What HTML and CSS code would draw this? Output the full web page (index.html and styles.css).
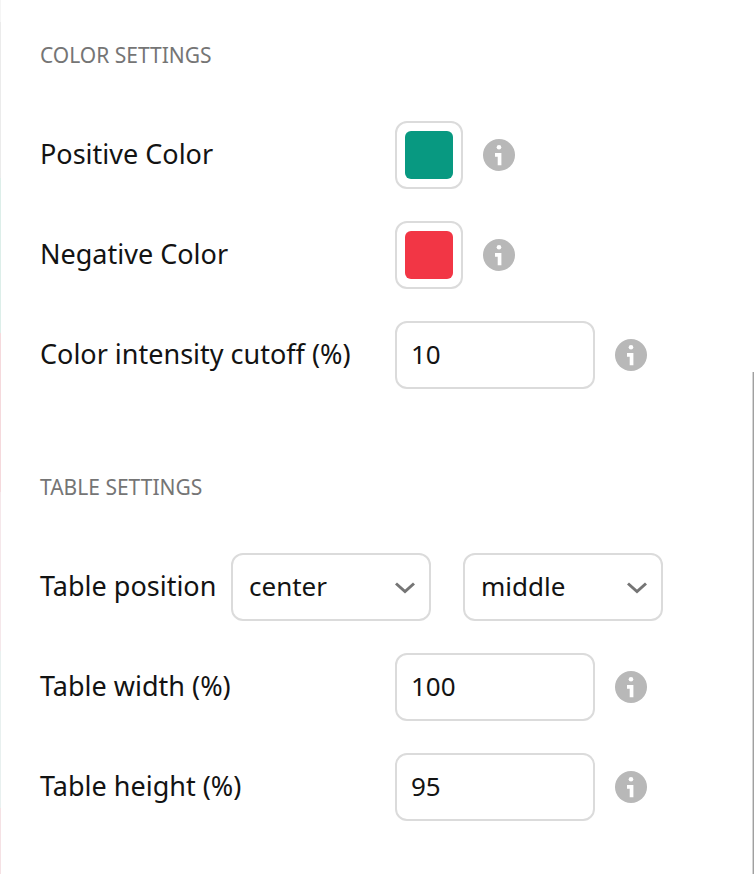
FILE: index.html
```html
<!DOCTYPE html>
<html lang="en">
<head>
<meta charset="utf-8">
<meta name="viewport" content="width=device-width, initial-scale=1">
<title>Settings</title>
<link rel="stylesheet" href="styles.css">
</head>
<body>
<svg width="0" height="0" class="symbols" aria-hidden="true">
  <symbol id="info" viewBox="0 0 32 32">
    <circle cx="16" cy="16" r="16" fill="#b8b8b8"/>
    <circle cx="16" cy="8.300" r="2.300" fill="#fff"/>
    <path d="M12 14h6.400v12.300h-3.700v-8.600H12z" fill="#fff"/>
  </symbol>
  <symbol id="chevron" viewBox="0 0 20 12">
    <path d="M1 1.500l9 8 9-8" fill="none" stroke="#757575" stroke-width="3"/>
  </symbol>
</svg>
<div class="edge" aria-hidden="true">
  <i class="pale"></i><i class="gray"></i><i class="green"></i><i class="red"></i><i class="pink"></i><i class="mint"></i><i class="rose"></i>
</div>
<form class="settings">
  <section class="group">
    <h2>COLOR SETTINGS</h2>
    <div class="row">
      <label for="positive">Positive Color</label>
      <input class="swatch" type="color" id="positive" value="#089981">
      <button class="info" type="button" aria-label="Info"><svg><use href="#info"/></svg></button>
    </div>
    <div class="row">
      <label for="negative">Negative Color</label>
      <input class="swatch" type="color" id="negative" value="#f23645">
      <button class="info" type="button" aria-label="Info"><svg><use href="#info"/></svg></button>
    </div>
    <div class="row">
      <label for="cutoff">Color intensity cutoff (%)</label>
      <input class="field" type="text" inputmode="numeric" id="cutoff" value="10">
      <button class="info" type="button" aria-label="Info"><svg><use href="#info"/></svg></button>
    </div>
  </section>
  <section class="group">
    <h2>TABLE SETTINGS</h2>
    <div class="row position">
      <label for="horizontal">Table position</label>
      <div class="select">
        <select id="horizontal"><option>left</option><option selected>center</option><option>right</option></select>
        <svg><use href="#chevron"/></svg>
      </div>
      <div class="select">
        <select id="vertical" aria-label="Vertical position"><option>top</option><option selected>middle</option><option>bottom</option></select>
        <svg><use href="#chevron"/></svg>
      </div>
    </div>
    <div class="row">
      <label for="width">Table width (%)</label>
      <input class="field" type="text" inputmode="numeric" id="width" value="100">
      <button class="info" type="button" aria-label="Info"><svg><use href="#info"/></svg></button>
    </div>
    <div class="row">
      <label for="height">Table height (%)</label>
      <input class="field" type="text" inputmode="numeric" id="height" value="95">
      <button class="info" type="button" aria-label="Info"><svg><use href="#info"/></svg></button>
    </div>
  </section>
</form>
<div class="thumb" aria-hidden="true"></div>
</body>
</html>
```
FILE: styles.css
```css
* { box-sizing: border-box; }

body {
  margin: 0;
  min-height: 100vh;
  display: flex;
  background: #fff;
  color: #131313;
  font-family: "Trebuchet MS", "Noto Sans", sans-serif;
  font-size: 26px;
  line-height: 32px;
}

.symbols { position: absolute; }

.edge {
  width: 1px;
  display: grid;
  grid-template-rows: 22fr 156fr 155fr 159fr 159fr 157fr 66fr;
}
.pale { background: #f5f5f5; }
.gray { background: #ebebeb; }
.green { background: #dceee9; }
.red { background: #f5d9dc; }
.pink { background: #f5e7ea; }
.mint { background: #e8f0ef; }
.rose { background: #f5e1e4; }

.settings {
  flex: 1;
  padding: 39px 39px 53px;
  display: flex;
  flex-direction: column;
  gap: 82px;
}

.group {
  display: flex;
  flex-direction: column;
  gap: 32px;
}

h2 {
  margin: 0 0 18px;
  font-size: 21px;
  line-height: 32px;
  font-weight: 400;
  color: #757575;
}

.row {
  display: flex;
  align-items: center;
}
.row label {
  flex: 0 0 355px;
  padding-bottom: 2px;
  font-size: 27px;
  white-space: nowrap;
}
.row.position label { flex-basis: 191px; }

.swatch, .field, select {
  height: 68px;
  margin: 0;
  border: 2px solid #dbdbdb;
  border-radius: 12px;
  background: #fff;
  color: inherit;
  font: inherit;
}
.swatch {
  appearance: none;
  width: 68px;
  padding: 8px;
}
.swatch::-webkit-color-swatch-wrapper { padding: 0; }
.swatch::-webkit-color-swatch {
  border: 0;
  border-radius: 6px;
}
.field {
  width: 200px;
  padding: 0 14px 2px;
}

.select { position: relative; }
.select + .select { margin-left: 32px; }
select {
  appearance: none;
  display: block;
  width: 200px;
  padding: 0 48px 2px 16px;
}
.select svg {
  position: absolute;
  right: 16px;
  top: 29px;
  width: 20px;
  height: 12px;
  pointer-events: none;
}

.info {
  margin: 0 0 0 20px;
  padding: 0;
  border: 0;
  background: none;
}
.info svg {
  display: block;
  width: 32px;
  height: 32px;
}

.thumb {
  position: fixed;
  top: 372px;
  right: 0;
  bottom: 0;
  width: 2px;
  background: #a0a0a0;
  border-left: 1px solid #d5d5d5;
}
```
